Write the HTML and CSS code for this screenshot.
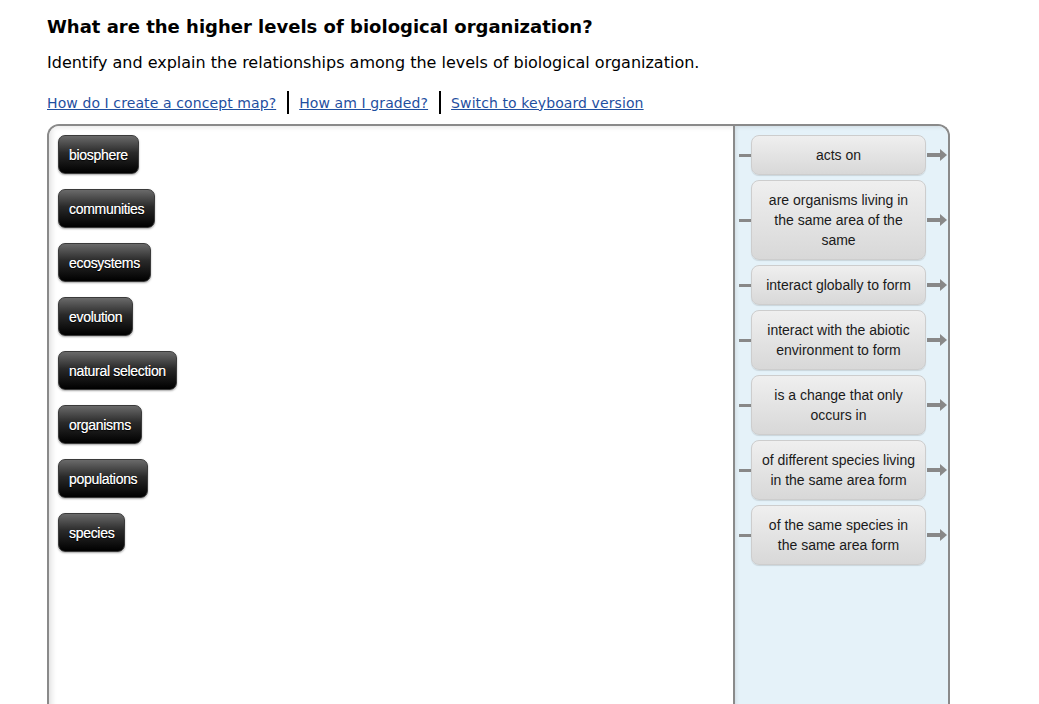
FILE: index.html
```html
<!DOCTYPE html>
<html lang="en">
<head>
    <meta charset="UTF-8">
    <title>Concept Map</title>
    <link rel="stylesheet" href="styles.css">
</head>
<body>
    <div class="page">
        <h1 class="question-title">What are the higher levels of biological organization?</h1>
        <p class="question-text">Identify and explain the relationships among the levels of biological organization.</p>

        <div class="help-links">
            <a href="#">How do I create a concept map?</a>
            <span class="sep"></span>
            <a href="#">How am I graded?</a>
            <span class="sep"></span>
            <a href="#">Switch to keyboard version</a>
        </div>

        <div class="concept-map">
            <!-- zona de trabajo con los conceptos -->
            <div class="canvas">
                <div class="term">biosphere</div>
                <div class="term">communities</div>
                <div class="term">ecosystems</div>
                <div class="term">evolution</div>
                <div class="term">natural selection</div>
                <div class="term">organisms</div>
                <div class="term">populations</div>
                <div class="term">species</div>
            </div>

            <!-- paleta de enlaces -->
            <div class="palette">
                <div class="link-row">
                    <span class="stub"></span>
                    <div class="link">acts on</div>
                    <svg class="arrow" width="20" height="12" viewBox="0 0 20 12"><rect x="0" y="4" width="14" height="4" fill="#888"/><polygon points="13,0 20,6 13,12" fill="#888"/></svg>
                </div>
                <div class="link-row">
                    <span class="stub"></span>
                    <div class="link">are organisms living in the same area of the same</div>
                    <svg class="arrow" width="20" height="12" viewBox="0 0 20 12"><rect x="0" y="4" width="14" height="4" fill="#888"/><polygon points="13,0 20,6 13,12" fill="#888"/></svg>
                </div>
                <div class="link-row">
                    <span class="stub"></span>
                    <div class="link">interact globally to form</div>
                    <svg class="arrow" width="20" height="12" viewBox="0 0 20 12"><rect x="0" y="4" width="14" height="4" fill="#888"/><polygon points="13,0 20,6 13,12" fill="#888"/></svg>
                </div>
                <div class="link-row">
                    <span class="stub"></span>
                    <div class="link">interact with the abiotic environment to form</div>
                    <svg class="arrow" width="20" height="12" viewBox="0 0 20 12"><rect x="0" y="4" width="14" height="4" fill="#888"/><polygon points="13,0 20,6 13,12" fill="#888"/></svg>
                </div>
                <div class="link-row">
                    <span class="stub"></span>
                    <div class="link">is a change that only occurs in</div>
                    <svg class="arrow" width="20" height="12" viewBox="0 0 20 12"><rect x="0" y="4" width="14" height="4" fill="#888"/><polygon points="13,0 20,6 13,12" fill="#888"/></svg>
                </div>
                <div class="link-row">
                    <span class="stub"></span>
                    <div class="link">of different species living in the same area form</div>
                    <svg class="arrow" width="20" height="12" viewBox="0 0 20 12"><rect x="0" y="4" width="14" height="4" fill="#888"/><polygon points="13,0 20,6 13,12" fill="#888"/></svg>
                </div>
                <div class="link-row">
                    <span class="stub"></span>
                    <div class="link">of the same species in the same area form</div>
                    <svg class="arrow" width="20" height="12" viewBox="0 0 20 12"><rect x="0" y="4" width="14" height="4" fill="#888"/><polygon points="13,0 20,6 13,12" fill="#888"/></svg>
                </div>
            </div>
        </div>
    </div>
</body>
</html>
```

FILE: styles.css
```css
html, body {
    margin: 0;
    padding: 0;
    background: #fff;
    overflow: hidden;
}

.page {
    padding-left: 47px;
    font-family: 'DejaVu Sans', Verdana, sans-serif;
    color: #000;
}

.question-title {
    margin: 0;
    padding-top: 16px;
    font-size: 18px;
    line-height: 21px;
    font-weight: bold;
}

.question-text {
    margin: 16px 0 0;
    font-size: 16px;
    line-height: 20px;
}

.help-links {
    display: flex;
    align-items: center;
    margin-top: 18px;
    height: 23px;
    font-size: 14px;
    letter-spacing: 0.1px;
}

.help-links a {
    color: #1f4f9f;
    text-decoration: underline;
}

.help-links .sep {
    width: 2px;
    height: 23px;
    background: #000;
    margin: 0 10px 0 11px;
}

.concept-map {
    display: flex;
    margin-top: 10px;
    width: 903px;
    height: 600px;
    box-sizing: border-box;
    border: 2px solid #8a8a8a;
    border-bottom: none;
    border-radius: 12px 12px 0 0;
    overflow: hidden;
}

.canvas {
    flex: 1;
    display: flex;
    flex-direction: column;
    align-items: flex-start;
    gap: 15px;
    padding: 9px 0 0 9px;
    background: #fff;
    box-shadow: inset 6px 4px 6px -4px rgba(0, 0, 0, 0.14);
}

.term {
    height: 39px;
    box-sizing: border-box;
    display: flex;
    align-items: center;
    padding: 0 10px;
    font-family: 'Liberation Sans', Arial, sans-serif;
    font-size: 14px;
    letter-spacing: -0.3px;
    color: #fff;
    text-shadow: 0 1px 1px rgba(0, 0, 0, 0.9), 0 0 0.5px #fff;
    background: linear-gradient(#6a6a6a, #2a2a2a 45%, #000);
    border: 1px solid #3a3a3a;
    border-radius: 7px;
    box-shadow: 0 1px 2px rgba(0, 0, 0, 0.35);
}

.palette {
    width: 213px;
    display: flex;
    flex-direction: column;
    gap: 5px;
    padding-top: 9px;
    background: #e5f2f9;
    border-left: 2px solid #8a8a8a;
    box-shadow: inset 3px 3px 4px -2px rgba(0, 0, 0, 0.1);
}

.link-row {
    display: flex;
    align-items: center;
    padding-left: 4px;
}

.stub {
    flex-shrink: 0;
    width: 12px;
    height: 3px;
    background: #888;
}

.link {
    flex-shrink: 0;
    width: 175px;
    box-sizing: border-box;
    padding: 9px 7px;
    text-align: center;
    font-family: 'Liberation Sans', Arial, sans-serif;
    font-size: 14px;
    line-height: 20px;
    color: #1a1a1a;
    background: linear-gradient(#efefef, #d8d8d8);
    border: 1px solid #cdcdcd;
    border-radius: 8px;
    box-shadow: 0 1px 1px rgba(0, 0, 0, 0.12);
}

.arrow {
    flex-shrink: 0;
    margin-left: 1px;
    display: block;
}
```
